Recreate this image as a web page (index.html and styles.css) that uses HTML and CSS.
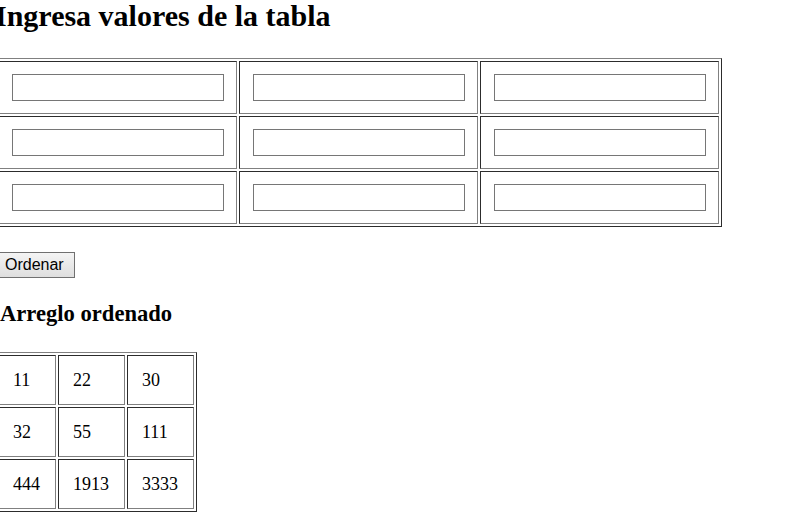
FILE: index.html
```html
<!DOCTYPE html>
<html lang="es">
<head>
<meta charset="utf-8">
<title>Ordenar tabla</title>
<link rel="stylesheet" href="styles.css">
</head>
<body>
<div class="page">
  <h1 class="title">Ingresa valores de la tabla</h1>
  <table class="grid">
    <tr>
      <td><input class="cell-input" type="text"></td>
      <td><input class="cell-input" type="text"></td>
      <td><input class="cell-input" type="text"></td>
    </tr>
    <tr>
      <td><input class="cell-input" type="text"></td>
      <td><input class="cell-input" type="text"></td>
      <td><input class="cell-input" type="text"></td>
    </tr>
    <tr>
      <td><input class="cell-input" type="text"></td>
      <td><input class="cell-input" type="text"></td>
      <td><input class="cell-input" type="text"></td>
    </tr>
  </table>
  <button class="sort-btn" type="button">Ordenar</button>
  <h3 class="subtitle">Arreglo ordenado</h3>
  <table class="result">
    <tr><td>11</td><td>22</td><td>30</td></tr>
    <tr><td>32</td><td>55</td><td>111</td></tr>
    <tr><td>444</td><td>1913</td><td>3333</td></tr>
  </table>
</div>
</body>
</html>
```

FILE: styles.css
```css
html, body {
  margin: 0;
  padding: 0;
  background: #ffffff;
}

body {
  font-family: "Liberation Serif", "Times New Roman", serif;
  color: #000000;
}

.page {
  margin-left: -5px;
  display: flex;
  flex-direction: column;
  align-items: flex-start;
}

.title {
  margin: 0 0 27px 0;
  font-size: 30px;
  line-height: 31px;
  font-weight: bold;
  white-space: nowrap;
}

.grid {
  border: 1px outset #808080;
  border-spacing: 2px;
  border-collapse: separate;
}

.grid td {
  border: 1px inset #808080;
  padding: 12px 12px 12px 13px;
  width: 212px;
  height: 27px;
}

.cell-input {
  display: block;
  box-sizing: border-box;
  width: 212px;
  height: 27px;
  margin: 0;
  padding: 5px;
  border: 1px solid #767676;
  border-radius: 0;
  font-family: "Liberation Sans", Arial, sans-serif;
  font-size: 13.33px;
  background: #ffffff;
}

.sort-btn {
  margin: 25px 0 0 0;
  box-sizing: border-box;
  height: 26px;
  padding: 0 10px 0 9px;
  border: 1px solid #707070;
  border-radius: 0;
  background: linear-gradient(#f4f4f4, #dedede);
  font-family: "Liberation Sans", Arial, sans-serif;
  font-size: 16px;
  color: #000000;
  line-height: 22px;
}

.subtitle {
  margin: 25px 0 27px 5px;
  font-size: 22.6px;
  line-height: 22px;
  font-weight: bold;
  white-space: nowrap;
}

.result {
  border: 1px outset #808080;
  border-spacing: 2px;
  border-collapse: separate;
}

.result td {
  border: 1px inset #808080;
  padding: 14px 15px 14px 14px;
  font-size: 18px;
  line-height: 20px;
  text-align: left;
}
```
